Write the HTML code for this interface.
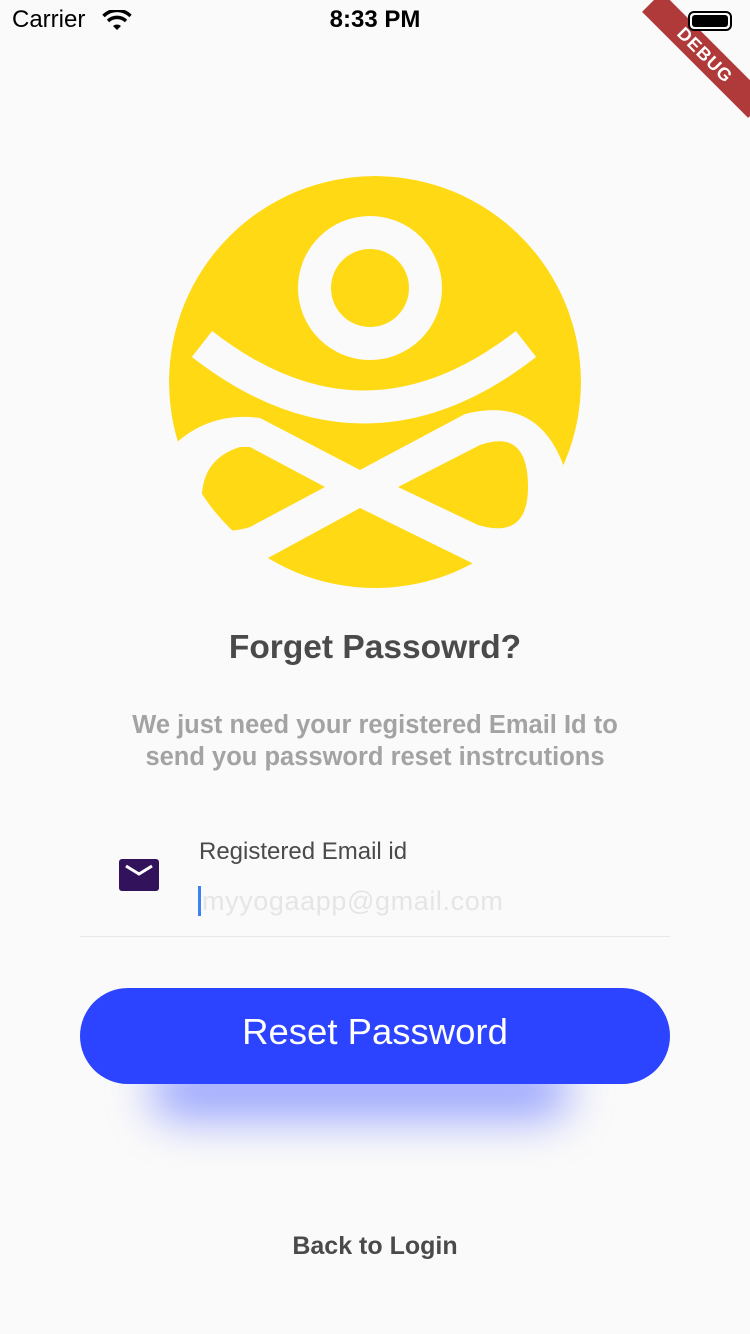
<!DOCTYPE html>
<html><head><meta charset="utf-8"><style>
body{margin:0;width:750px;height:1334px;background:#fafafa;font-family:"Liberation Sans",sans-serif;position:relative;overflow:hidden}
.a{position:absolute}
</style></head><body>
<div class="a" style="left:12px;top:6px;font-size:24px;color:#000">Carrier</div>
<svg class="a" style="left:102px;top:10px" width="30" height="22" viewBox="0 0 30 22"><path d="M15 20 L11 16 A6 6 0 0 1 19 16 Z" fill="#000"/><path d="M6 11 A13 13 0 0 1 24 11" stroke="#000" stroke-width="3.4" fill="none"/><path d="M1.5 6 A19 19 0 0 1 28.5 6" stroke="#000" stroke-width="3.4" fill="none"/></svg>
<div class="a" style="left:0;width:750px;top:6px;text-align:center;font-size:24px;font-weight:bold">8:33 PM</div>
<div class="a" style="left:630px;top:41px;width:150px;height:28px;background:#b03a3a;transform:rotate(45deg);color:#fff;font-weight:bold;font-size:18px;text-align:center;line-height:28px;letter-spacing:1px">DEBUG</div>
<div class="a" style="left:688px;top:11px;width:44px;height:20px;border:2px solid #000;border-radius:6px;box-sizing:border-box;padding:2px;background:#fafafa"><div style="background:#000;height:100%;border-radius:3px"></div></div>
<svg class="a" style="left:0;top:0" width="750" height="620">
<defs><clipPath id="c"><circle cx="375" cy="382" r="206"/></clipPath></defs>
<g clip-path="url(#c)">
<circle cx="375" cy="382" r="206" fill="#ffd913"/>
<circle cx="370" cy="288" r="55.5" fill="none" stroke="#fafafa" stroke-width="33"/>
<path d="M202 344 Q364 470 526 344" fill="none" stroke="#fafafa" stroke-width="33"/>
<path d="M160 460 Q200 410 260 418 L360 470 L465 414 Q540 395 565 470 L600 600 L150 600 Z" fill="#fafafa"/>
<path d="M250 447 L325 487 L250 527 Q235 532 220 530 L202 508 Q198 460 240 447 Z" fill="#ffd913"/>
<path d="M398 487 L480 445 Q528 428 528 487 Q528 540 478 525 Z" fill="#ffd913"/>
<path d="M268 558 L360 508 L472 563 L472 600 L268 600 Z" fill="#ffd913"/>
</g>
<rect x="150" y="588" width="450" height="30" fill="#fafafa"/>
</svg>
<div class="a" style="left:0;width:750px;top:629px;text-align:center;font-size:33.5px;font-weight:bold;color:#4a4a4a">Forget Passowrd?</div>
<div class="a" style="left:0;width:750px;top:709px;text-align:center;font-size:25.5px;font-weight:bold;color:#a3a3a3;line-height:32px">We just need your registered Email Id to<br>send you password reset instrcutions</div>
<div class="a" style="left:119px;top:859px;width:40px;height:32px;background:#32125a;border-radius:3px"></div>
<svg class="a" style="left:119px;top:859px" width="40" height="32"><path d="M7 7 L20 15 L33 7" stroke="#fff" stroke-width="3" fill="none"/></svg>
<div class="a" style="left:199px;top:838px;font-size:24px;color:#4a4a4a">Registered Email id</div>
<div class="a" style="left:198px;top:886px;width:3px;height:30px;background:#3b82f6"></div>
<div class="a" style="left:202px;top:886px;font-size:27px;letter-spacing:0.6px;color:#e5e5e5">myyogaapp@gmail.com</div>
<div class="a" style="left:80px;top:936px;width:590px;height:1px;background:#e8e8e8"></div>
<div class="a" style="left:150px;top:1060px;width:420px;height:60px;border-radius:40px;background:rgba(80,100,255,.55);filter:blur(22px)"></div>
<div class="a" style="left:80px;top:988px;width:590px;height:96px;border-radius:48px;background:#2c44ff;color:#fff;font-size:36.5px;text-align:center;line-height:88px">Reset Password</div>
<div class="a" style="left:0;width:750px;top:1232px;text-align:center;font-size:25px;font-weight:bold;color:#4a4a4a">Back to Login</div>
</body></html>
